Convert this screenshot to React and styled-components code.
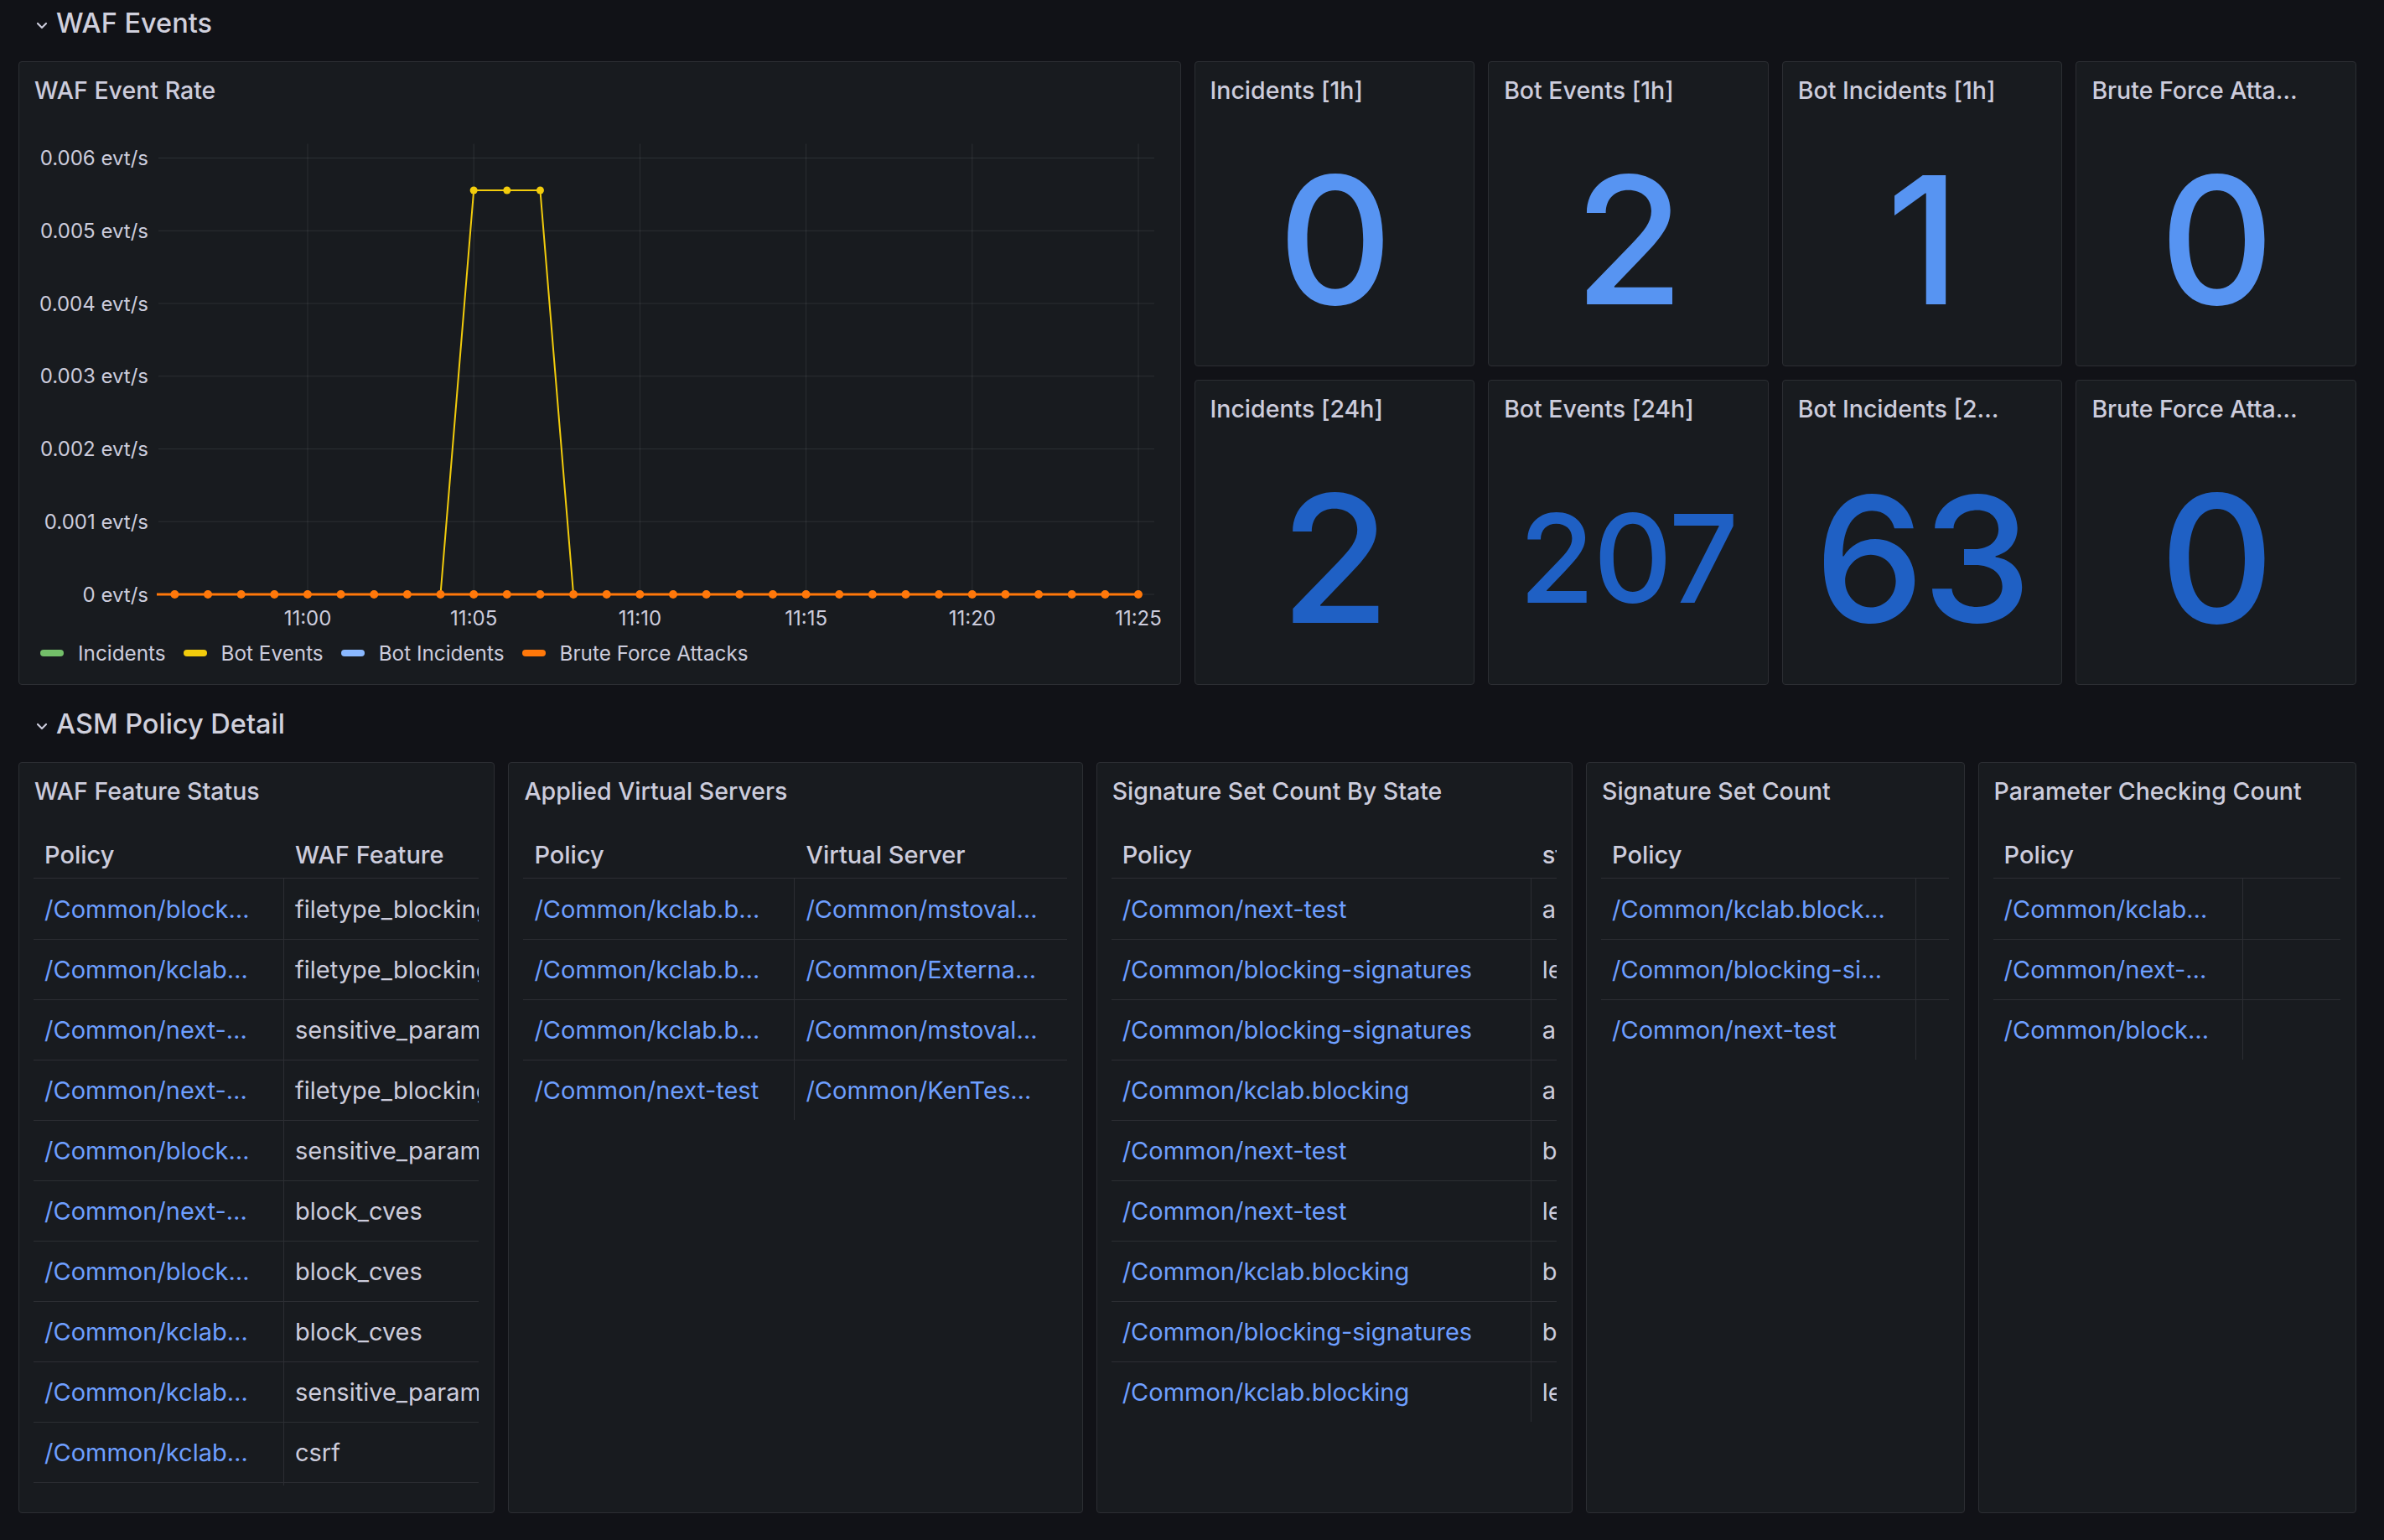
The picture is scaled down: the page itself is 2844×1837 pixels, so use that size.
import React from 'react';
import styled, { createGlobalStyle } from 'styled-components';

const GlobalStyle = createGlobalStyle`
  *, *::before, *::after {
    box-sizing: border-box;
  }

  html, body {
    margin: 0;
    padding: 0;
    background: #111217;
    font-family: Inter, "Noto Sans", "Liberation Sans", sans-serif;
    color: #ccccdc;
  }
`;

const Dashboard = styled.div`
  display: grid;
  grid-template-columns: repeat(24, minmax(0, 1fr));
  grid-auto-rows: 60px;
  gap: 16px;
  padding: 0 33px 0 22px;
  margin-top: -3px;
  height: 1840px;
  overflow: hidden;
`;

const SectionHeader = styled.div`
  grid-column: span 24;
  display: flex;
  align-items: center;
  gap: 10px;
  padding-left: 21px;
  font-size: 32.5px;
  font-weight: 500;
  color: #d0d0dd;
`;

const Chevron = styled.svg`
  width: 14px;
  height: 10px;
  margin-top: 7px;
`;

const Panel = styled.div`
  grid-column: span ${(p) => p.$cols};
  grid-row: span ${(p) => p.$rows};
  display: flex;
  flex-direction: column;
  min-width: 0;
  background: #181b1f;
  border: 1px solid #2c2e33;
  border-radius: 4px;
  overflow: hidden;
`;

const PanelHeader = styled.div`
  height: 66px;
  flex: none;
  display: flex;
  align-items: center;
  padding: 0 18px;
  font-size: 28.5px;
  font-weight: 500;
  color: #ccccdc;
  white-space: nowrap;
  overflow: hidden;
`;

/* ---------- time series ---------- */

const ChartSvg = styled.svg`
  display: block;
  flex: none;
  font-family: Inter, "Noto Sans", sans-serif;
`;

const Legend = styled.div`
  height: 38px;
  display: flex;
  align-items: center;
  gap: 21px;
  padding-left: 25px;
  font-size: 24.3px;
  color: #ccccdc;
`;

const LegendItem = styled.div`
  display: flex;
  align-items: center;
  gap: 17px;
`;

const Swatch = styled.span`
  width: 28px;
  height: 8px;
  border-radius: 4px;
  background: ${(p) => p.$color};
`;

const series = [
  { name: 'Incidents', color: '#73bf69' },
  { name: 'Bot Events', color: '#f2cc0c' },
  { name: 'Bot Incidents', color: '#8ab8ff' },
  { name: 'Brute Force Attacks', color: '#ff780a' },
];

const X0 = 185.4;
const DX = 39.64;
const Y0 = 569;
const DY = 86.75;
const GRID = 'rgba(240,250,255,0.09)';

const yFor = (v) => Y0 - (v / 0.001) * DY;

function EventRateChart() {
  const points = Array.from({ length: 30 }, (_, i) => X0 + i * DX);
  const botValues = points.map((_, i) => (i >= 9 && i <= 11 ? 1 / 180 : 0));
  const botPath = points.map((x, i) => `${x},${yFor(botValues[i])}`).join(' ');
  const ticks = [6, 5, 4, 3, 2, 1, 0];
  const times = ['11:00', '11:05', '11:10', '11:15', '11:20', '11:25'];

  return (
    <ChartSvg width="1384" height="620" viewBox="0 0 1384 620">
      {ticks.map((t) => {
        const y = yFor(t / 1000);
        return (
          <g key={t}>
            <line x1="166" x2="1354" y1={y} y2={y} stroke={GRID} strokeWidth="1" />
            <text x="154" y={y + 8.5} fontSize="24" fill="#ccccdc" textAnchor="end">
              {t === 0 ? '0 evt/s' : `0.00${t} evt/s`}
            </text>
          </g>
        );
      })}
      {times.map((label, k) => {
        const x = 344 + k * 198.2;
        return (
          <g key={label}>
            <line x1={x} x2={x} y1="31.5" y2={Y0} stroke={GRID} strokeWidth="1" />
            <text x={x} y="606" fontSize="24" fill="#ccccdc" textAnchor="middle">
              {label}
            </text>
          </g>
        );
      })}

      <polyline points={botPath} fill="none" stroke="#f2cc0c" strokeWidth="2" strokeLinejoin="round" />
      {points.map((x, i) =>
        botValues[i] > 0 ? <circle key={`b${i}`} cx={x} cy={yFor(botValues[i])} r="4.5" fill="#f2cc0c" /> : null
      )}

      <line x1="164" x2={points[29]} y1={Y0} y2={Y0} stroke="#ff780a" strokeWidth="3" />
      {points.map((x, i) => (
        <circle key={`o${i}`} cx={x} cy={Y0} r="5" fill="#ff780a" />
      ))}
    </ChartSvg>
  );
}

/* ---------- stat ---------- */

const StatBody = styled.div`
  flex: 1;
  display: flex;
  align-items: center;
  justify-content: center;
  padding-bottom: 4px;
`;

const StatValue = styled.div`
  font-size: ${(p) => p.$size}px;
  line-height: 1;
  font-weight: 500;
  color: ${(p) => p.$color};
  letter-spacing: -0.01em;
`;

const stats = [
  { title: 'Incidents [1h]', value: '0', size: 212, color: '#5794f2' },
  { title: 'Bot Events [1h]', value: '2', size: 212, color: '#5794f2' },
  { title: 'Bot Incidents [1h]', value: '1', size: 212, color: '#5794f2' },
  { title: 'Brute Force Atta…', value: '0', size: 212, color: '#5794f2' },
  { title: 'Incidents [24h]', value: '2', size: 212, color: '#1f60c4' },
  { title: 'Bot Events [24h]', value: '207', size: 146, color: '#1f60c4' },
  { title: 'Bot Incidents [2…', value: '63', size: 208, color: '#1f60c4' },
  { title: 'Brute Force Atta…', value: '0', size: 212, color: '#1f60c4' },
];

/* ---------- tables ---------- */

const TableWrap = styled.div`
  flex: 1;
  min-height: 0;
  margin: 0 18px 32px 17px;
  overflow: hidden;
`;

const Row = styled.div`
  display: grid;
  grid-template-columns: ${(p) => p.$cols};
  height: 72px;
  border-top: 1px solid #2c2e33;

  &:first-child {
    border-top: none;
    border-bottom: 1px solid #2c2e33;
  }
  &:nth-child(2) {
    border-top: none;
  }
`;

const Cell = styled.div`
  display: flex;
  align-items: center;
  padding: ${(p) => (p.$head ? '16px 13px 0' : '0 13px')};
  font-size: 29px;
  font-weight: ${(p) => (p.$head ? 500 : 400)};
  color: ${(p) => (p.$link ? '#6e9fff' : '#ccccdc')};
  white-space: nowrap;
  overflow: hidden;
  border-right: ${(p) => (p.$divider ? '1px solid #2c2e33' : 'none')};
`;

function DataTable({ cols, head, rows, linkCols = [0] }) {
  return (
    <TableWrap>
      <Row $cols={cols}>
        {head.map((h, i) => (
          <Cell key={i} $head>
            {h}
          </Cell>
        ))}
      </Row>
      {rows.map((r, ri) => (
        <Row key={ri} $cols={cols}>
          {r.map((c, ci) => (
            <Cell key={ci} $link={linkCols.includes(ci)} $divider={ci === 0}>
              {c}
            </Cell>
          ))}
        </Row>
      ))}
    </TableWrap>
  );
}

const tables = [
  {
    title: 'WAF Feature Status',
    span: 5,
    cols: '299px 320px',
    head: ['Policy', 'WAF Feature'],
    rows: [
      ['/Common/block…', 'filetype_blocking'],
      ['/Common/kclab…', 'filetype_blocking'],
      ['/Common/next-…', 'sensitive_parameters'],
      ['/Common/next-…', 'filetype_blocking'],
      ['/Common/block…', 'sensitive_parameters'],
      ['/Common/next-…', 'block_cves'],
      ['/Common/block…', 'block_cves'],
      ['/Common/kclab…', 'block_cves'],
      ['/Common/kclab…', 'sensitive_parameters'],
      ['/Common/kclab…', 'csrf'],
      ['/Common/next-…', 'csrf'],
    ],
  },
  {
    title: 'Applied Virtual Servers',
    span: 6,
    cols: '324px 326px',
    head: ['Policy', 'Virtual Server'],
    links: [0, 1],
    rows: [
      ['/Common/kclab.b…', '/Common/mstoval…'],
      ['/Common/kclab.b…', '/Common/Externa…'],
      ['/Common/kclab.b…', '/Common/mstoval…'],
      ['/Common/next-test', '/Common/KenTes…'],
    ],
  },
  {
    title: 'Signature Set Count By State',
    span: 5,
    cols: '501px 200px',
    head: ['Policy', 'state'],
    rows: [
      ['/Common/next-test', 'alarm'],
      ['/Common/blocking-signatures', 'learn'],
      ['/Common/blocking-signatures', 'alarm'],
      ['/Common/kclab.blocking', 'alarm'],
      ['/Common/next-test', 'block'],
      ['/Common/next-test', 'learn'],
      ['/Common/kclab.blocking', 'block'],
      ['/Common/blocking-signatures', 'block'],
      ['/Common/kclab.blocking', 'learn'],
    ],
  },
  {
    title: 'Signature Set Count',
    span: 4,
    cols: '376px 1fr',
    head: ['Policy', ''],
    rows: [
      ['/Common/kclab.block…', ''],
      ['/Common/blocking-si…', ''],
      ['/Common/next-test', ''],
    ],
  },
  {
    title: 'Parameter Checking Count',
    span: 4,
    cols: '298px 1fr',
    head: ['Policy', ''],
    rows: [
      ['/Common/kclab…', ''],
      ['/Common/next-…', ''],
      ['/Common/block…', ''],
    ],
  },
];

function Section({ title }) {
  return (
    <SectionHeader>
      <Chevron viewBox="0 0 14 10">
        <polyline points="2,2 7,7 12,2" fill="none" stroke="#ccccdc" strokeWidth="2.2" strokeLinecap="round" strokeLinejoin="round" />
      </Chevron>
      {title}
    </SectionHeader>
  );
}

export default function App() {
  return (
    <>
      <GlobalStyle />
      <Dashboard>
        <Section title="WAF Events" />

        <Panel $cols={12} $rows={10}>
          <PanelHeader>WAF Event Rate</PanelHeader>
          <EventRateChart />
          <Legend>
            {series.map((s) => (
              <LegendItem key={s.name}>
                <Swatch $color={s.color} />
                {s.name}
              </LegendItem>
            ))}
          </Legend>
        </Panel>

        {stats.map((s, i) => (
          <Panel key={i} $cols={3} $rows={5}>
            <PanelHeader>{s.title}</PanelHeader>
            <StatBody>
              <StatValue $size={s.size} $color={s.color}>
                {s.value}
              </StatValue>
            </StatBody>
          </Panel>
        ))}

        <Section title="ASM Policy Detail" />

        {tables.map((t) => (
          <Panel key={t.title} $cols={t.span} $rows={12}>
            <PanelHeader>{t.title}</PanelHeader>
            <DataTable cols={t.cols} head={t.head} rows={t.rows} linkCols={t.links || [0]} />
          </Panel>
        ))}
      </Dashboard>
    </>
  );
}
